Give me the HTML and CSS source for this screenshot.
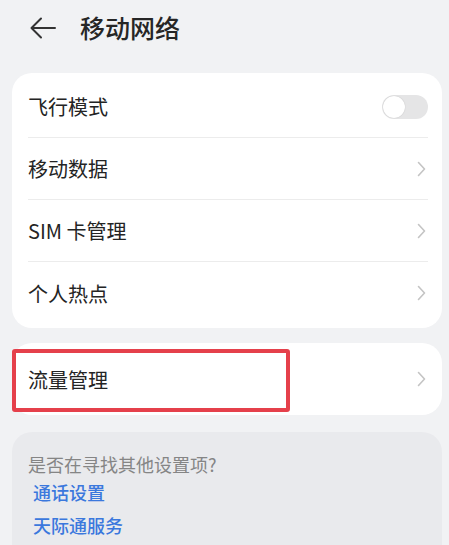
FILE: index.html
```html
<!DOCTYPE html>
<html lang="zh-CN">
<head>
<meta charset="utf-8">
<link rel="stylesheet" href="styles.css">
</head>
<body>
<header class="topbar">
  <svg class="back" width="26" height="22" viewBox="0 0 26 22"><path d="M25 11H2M11 1.5L1.5 11L11 20.5" fill="none" stroke="#333" stroke-width="2" stroke-linecap="round" stroke-linejoin="round"/></svg>
  <h1 class="title">移动网络</h1>
</header>
<main class="content">
  <section class="card">
    <div class="row"><span class="label">飞行模式</span><span class="toggle"><span class="knob"></span></span></div>
    <div class="row"><span class="label">移动数据</span><svg class="chev" width="9" height="16" viewBox="0 0 9 16"><path d="M1.5 1.5L7.5 8L1.5 14.5" fill="none" stroke="#c4c4c4" stroke-width="1.6" stroke-linecap="round" stroke-linejoin="round"/></svg></div>
    <div class="row"><span class="label">SIM 卡管理</span><svg class="chev" width="9" height="16" viewBox="0 0 9 16"><path d="M1.5 1.5L7.5 8L1.5 14.5" fill="none" stroke="#c4c4c4" stroke-width="1.6" stroke-linecap="round" stroke-linejoin="round"/></svg></div>
    <div class="row last"><span class="label">个人热点</span><svg class="chev" width="9" height="16" viewBox="0 0 9 16"><path d="M1.5 1.5L7.5 8L1.5 14.5" fill="none" stroke="#c4c4c4" stroke-width="1.6" stroke-linecap="round" stroke-linejoin="round"/></svg></div>
  </section>
  <section class="card single">
    <div class="row last tall"><span class="label">流量管理</span><svg class="chev" width="9" height="16" viewBox="0 0 9 16"><path d="M1.5 1.5L7.5 8L1.5 14.5" fill="none" stroke="#c4c4c4" stroke-width="1.6" stroke-linecap="round" stroke-linejoin="round"/></svg></div>
    <div class="highlight"></div>
  </section>
  <section class="suggest">
    <p class="hint">是否在寻找其他设置项?</p>
    <a class="link">通话设置</a>
    <a class="link second">天际通服务</a>
  </section>
</main>
</body>
</html>
```
FILE: styles.css
```css
* { box-sizing: border-box; }
html, body {
  margin: 0;
  padding: 0;
  background: #f1f2f4;
  font-family: "Noto Sans CJK SC", "Noto Sans", sans-serif;
  color: #222;
  overflow: hidden;
}
.topbar {
  height: 55px;
  display: flex;
  align-items: center;
  padding-left: 30px;
  gap: 24px;
}
.back { display: block; margin-top: 1px; }
.title {
  margin: 0;
  font-size: 25px;
  font-weight: 500;
  color: #262626;
  line-height: 1;
}
.content {
  padding: 18px 7px 0 12px;
  display: flex;
  flex-direction: column;
}
.card {
  background: #fff;
  border-radius: 20px;
  padding: 3px 14px 4px 16px;
  position: relative;
}
.card.single {
  margin-top: 15px;
  padding: 0 14px 0 16px;
}
.row {
  height: 62px;
  display: flex;
  align-items: center;
  justify-content: space-between;
  border-bottom: 1px solid #ececec;
}
.row.last { border-bottom: none; }
.row.tall { height: 72px; }
.label {
  font-size: 20px;
  color: #242424;
}
.chev { margin-right: 2px; }
.toggle {
  width: 46px;
  height: 24px;
  border-radius: 12px;
  background: #e5e5e6;
  position: relative;
}
.knob {
  position: absolute;
  left: 1px;
  top: 1px;
  width: 22px;
  height: 22px;
  border-radius: 50%;
  background: #fff;
  box-shadow: 0 0 1px rgba(0,0,0,0.25);
}
.highlight {
  position: absolute;
  left: 0;
  top: 6px;
  width: 278px;
  height: 63px;
  border: 4px solid #e5404b;
  border-radius: 3px;
}
.suggest {
  margin-top: 17px;
  background: #e9eaed;
  border-radius: 20px 20px 0 0;
  padding: 20px 16px 20px 16px;
  display: flex;
  flex-direction: column;
  align-items: flex-start;
  height: 140px;
}
.hint {
  margin: 0;
  font-size: 18px;
  line-height: 24px;
  color: #858585;
}
.link {
  margin-left: 5px;
  font-size: 18px;
  line-height: 32px;
  color: #3b78dd;
  font-weight: 500;
}
.link.second { line-height: 34px; }
```
